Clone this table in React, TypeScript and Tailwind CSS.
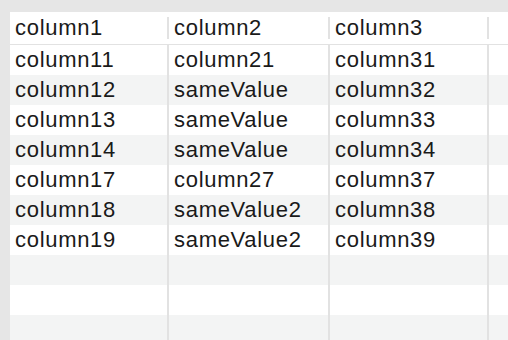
const rows: string[][] = [
  ['column11', 'column21', 'column31'],
  ['column12', 'sameValue', 'column32'],
  ['column13', 'sameValue', 'column33'],
  ['column14', 'sameValue', 'column34'],
  ['column17', 'column27', 'column37'],
  ['column18', 'sameValue2', 'column38'],
  ['column19', 'sameValue2', 'column39'],
  ['', '', ''],
  ['', '', ''],
  ['', '', ''],
];

const widths = ['w-[159px]', 'w-[161px]', 'w-[159px]'];

export default function App() {
  return (
    <div className="h-[340px] w-[508px] overflow-hidden bg-[#e6e6e6] pl-[10px] pt-[12px] font-['Liberation_Sans',Arial,sans-serif] text-[22px] tracking-[0.7px] text-[#1a1a1a]">
      <div className="bg-white">
        {/* Cabecera */}
        <div className="flex h-[33px] border-b border-[#e2e2e2]">
          {['column1', 'column2', 'column3'].map((h, i) => (
            <div key={h} className={`${widths[i]} flex items-center justify-between`}>
              <span className="pl-[5px] leading-none">{h}</span>
              <div className="h-[22px] w-[2px] bg-[#e2e2e2]" />
            </div>
          ))}
          <div className="flex-1" />
        </div>

        {/* Filas */}
        {rows.map((r, ri) => (
          <div key={ri} className={`flex h-[30px] ${ri % 2 === 1 ? 'bg-[#f3f4f4]' : 'bg-white'}`}>
            {r.map((c, ci) => (
              <div
                key={ci}
                className={`${widths[ci]} flex items-center border-r-2 border-[#e2e2e2] pl-[5px] leading-none`}
              >
                {c}
              </div>
            ))}
            <div className="flex-1" />
          </div>
        ))}
      </div>
    </div>
  );
}
